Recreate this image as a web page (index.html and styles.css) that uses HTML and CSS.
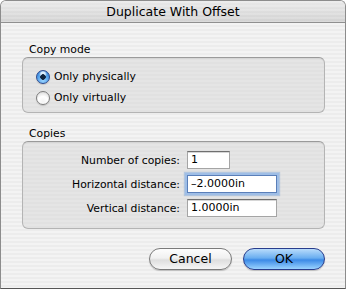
FILE: index.html
```html
<!DOCTYPE html>
<html lang="en">
<head>
    <meta charset="UTF-8">
    <title>Duplicate With Offset</title>
    <link rel="stylesheet" href="styles.css">
</head>
<body>
    <div class="window">
        <div class="titlebar">Duplicate With Offset</div>
        <div class="content">
            <div class="group">
                <div class="group-label">Copy mode</div>
                <div class="group-box radios">
                    <div class="radio"><span class="radio-btn checked"></span>Only physically</div>
                    <div class="radio"><span class="radio-btn"></span>Only virtually</div>
                </div>
            </div>
            <div class="group copies">
                <div class="group-label">Copies</div>
                <div class="group-box fields">
                    <span class="field-label">Number of copies:</span>
                    <span class="field short">1</span>
                    <span class="field-label">Horizontal distance:</span>
                    <span class="field focus">&#8211;2.0000in</span>
                    <span class="field-label">Vertical distance:</span>
                    <span class="field">1.0000in</span>
                </div>
            </div>
            <div class="buttons">
                <div class="btn">Cancel</div>
                <div class="btn default">OK</div>
            </div>
        </div>
    </div>
</body>
</html>
```

FILE: styles.css
```css
html, body{
    margin: 0;
    padding: 0;
    background: #fff;
}
body{
    font-family: "DejaVu Sans", "Noto Sans", sans-serif;
    font-size: 10.8px;
    color: #000;
}

/* window frame */
.window{
    width: 346px;
    height: 289px;
    box-sizing: border-box;
    border: 1px solid #8c8c8c;
    border-bottom-color: #555;
    border-radius: 6px 6px 0 0;
    overflow: hidden;
    background: repeating-linear-gradient(#ececec 0 2px, #f3f3f3 2px 4px);
}
.titlebar{
    height: 21px;
    line-height: 21px;
    text-align: center;
    font-size: 12.5px;
    border-bottom: 1px solid #8f8f8f;
    background:
        repeating-linear-gradient(rgba(255,255,255,.18) 0 2px, rgba(0,0,0,0) 2px 4px),
        linear-gradient(#e9e9e9, #d2d2d2);
}
.content{
    padding: 20px 20px 0 21px;
}

/* group boxes */
.group-label{
    line-height: 14px;
    padding-left: 7px;
}
.copies{
    margin-top: 14px;
}
.group-box{
    border: 1px solid #b4b4b4;
    border-top-color: #9a9a9a;
    border-radius: 6px;
    background: repeating-linear-gradient(#e1e1e1 0 2px, #e5e5e5 2px 4px);
    box-shadow: inset 0 1px 1px rgba(0,0,0,.06);
}
.radios{
    padding: 8px 0 4px 13px;
}
.radio{
    display: flex;
    align-items: center;
    height: 21px;
    gap: 4px;
}
.radio-btn{
    width: 12px;
    height: 12px;
    border-radius: 50%;
    border: 1px solid #7d7d7d;
    background: radial-gradient(circle at 50% 80%, #f4f4f4, #fff 45%, #cfcfcf 100%);
    box-shadow: 0 1px 1px rgba(0,0,0,.15);
}
.radio-btn.checked{
    border-color: #2d4a8e;
    background:
        radial-gradient(circle, #10243f 0 2.5px, rgba(0,0,0,0) 3px),
        radial-gradient(circle at 50% 25%, #dcefff 0 2px, rgba(0,0,0,0) 4px),
        radial-gradient(circle at 50% 80%, #9ad4ff, #4a9ae8 60%, #2e6fc4);
}

/* fields */
.fields{
    display: grid;
    grid-template-columns: 157px auto;
    column-gap: 7px;
    row-gap: 6px;
    align-items: center;
    justify-items: start;
    padding: 9px 0 11px;
}
.field-label{
    justify-self: end;
}
.field{
    box-sizing: border-box;
    width: 90px;
    height: 18px;
    line-height: 16px;
    padding-left: 3px;
    background: #fff;
    border: 1px solid #a5a5a5;
    border-top-color: #6f6f6f;
    box-shadow: inset 0 1px 0 #d6d6d6;
    font-size: 11px;
}
.field.short{
    width: 43px;
}
.field.focus{
    border-color: #5a7fb9;
    box-shadow: 0 0 0 2px #9fbee6, 0 0 1px 3px rgba(130,170,220,.5);
}

/* buttons */
.buttons{
    display: flex;
    justify-content: flex-end;
    gap: 11px;
    margin-top: 19px;
}
.btn{
    width: 81px;
    height: 20px;
    line-height: 20px;
    text-align: center;
    font-size: 12.5px;
    border-radius: 11px;
    border: 1px solid #7a7a7a;
    background: linear-gradient(#fdfdfd, #f1f1f1 45%, #dedede 55%, #f6f6f6);
    box-shadow: 0 1px 1px rgba(0,0,0,.2);
}
.btn.default{
    width: 80px;
    border-color: #283c8c;
    background: linear-gradient(#b9dcfb, #6aaef0 45%, #3c8ae6 55%, #9ad3ff);
}
```
